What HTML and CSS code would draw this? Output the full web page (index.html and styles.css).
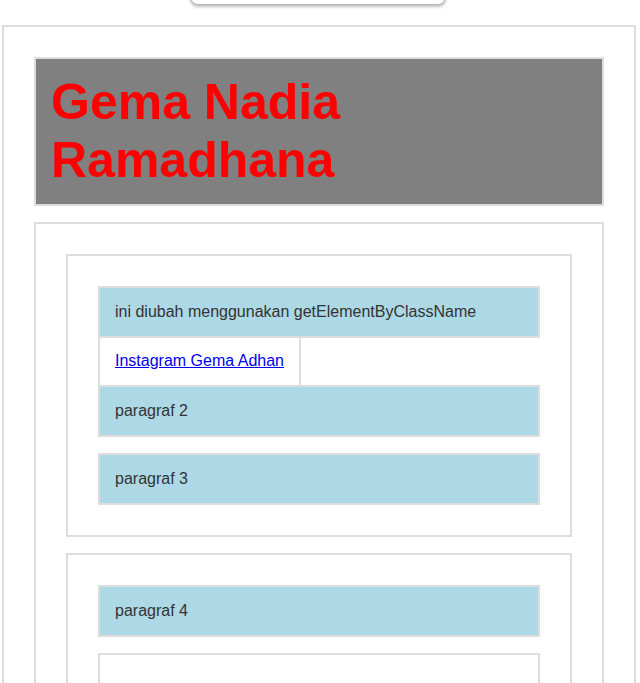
FILE: index.html
```html
<!DOCTYPE html>
<html lang="id">
<head>
<meta charset="utf-8">
<title>Gema Nadia Ramadhana</title>
<link rel="stylesheet" href="styles.css">
</head>
<body>
<div class="top-tab"></div>
<div class="page">
  <header class="header">
    <h1 class="title">Gema Nadia Ramadhana</h1>
  </header>
  <main class="main">
    <section class="section">
      <p class="item">ini diubah menggunakan getElementByClassName</p>
      <div class="link-row"><a class="link-box" href="#">Instagram Gema Adhan</a></div>
      <p class="item">paragraf 2</p>
      <p class="item spaced">paragraf 3</p>
    </section>
    <section class="section">
      <p class="item">paragraf 4</p>
      <div class="item blank spaced"></div>
    </section>
  </main>
</div>
</body>
</html>
```
FILE: styles.css
```css
html, body {
  margin: 0;
  padding: 0;
  background: #fff;
}
body {
  font-family: "Liberation Sans", Arial, sans-serif;
  color: #333;
  position: relative;
  overflow: hidden;
  height: 683px;
}
.top-tab {
  position: absolute;
  top: -20px;
  left: 190px;
  width: 254px;
  height: 23px;
  border: 1px solid #b5b5b5;
  border-radius: 8px;
  background: #fff;
  box-shadow: 0 2px 3px rgba(0, 0, 0, 0.25);
}
.page {
  margin: 25px 0 0 2px;
  width: 634px;
  box-sizing: border-box;
  border: 2px solid #ddd;
  padding: 30px;
  display: flex;
  flex-direction: column;
  gap: 16px;
}
.header {
  background: #808080;
  border: 2px solid #ddd;
  padding: 15px;
}
.title {
  margin: 0;
  color: #f00;
  font-size: 50px;
  font-weight: bold;
  line-height: 57.5px;
}
.main {
  border: 2px solid #ddd;
  padding: 30px;
  display: flex;
  flex-direction: column;
  gap: 16px;
}
.section {
  border: 2px solid #ddd;
  padding: 30px;
  display: flex;
  flex-direction: column;
}
.item {
  margin: 0;
  background: #add8e6;
  border: 2px solid #ddd;
  padding: 15px;
  font-size: 16px;
  line-height: 18px;
}
.spaced {
  margin-top: 16px;
}
.blank {
  background: #fff;
  height: 60px;
}
.link-row {
  display: flex;
  margin-top: -1px;
}
.link-box {
  border-left: 2px solid #ddd;
  border-right: 2px solid #ddd;
  padding: 15px;
  font-size: 16px;
  line-height: 18px;
  color: #00e;
  text-decoration: underline;
}
```
